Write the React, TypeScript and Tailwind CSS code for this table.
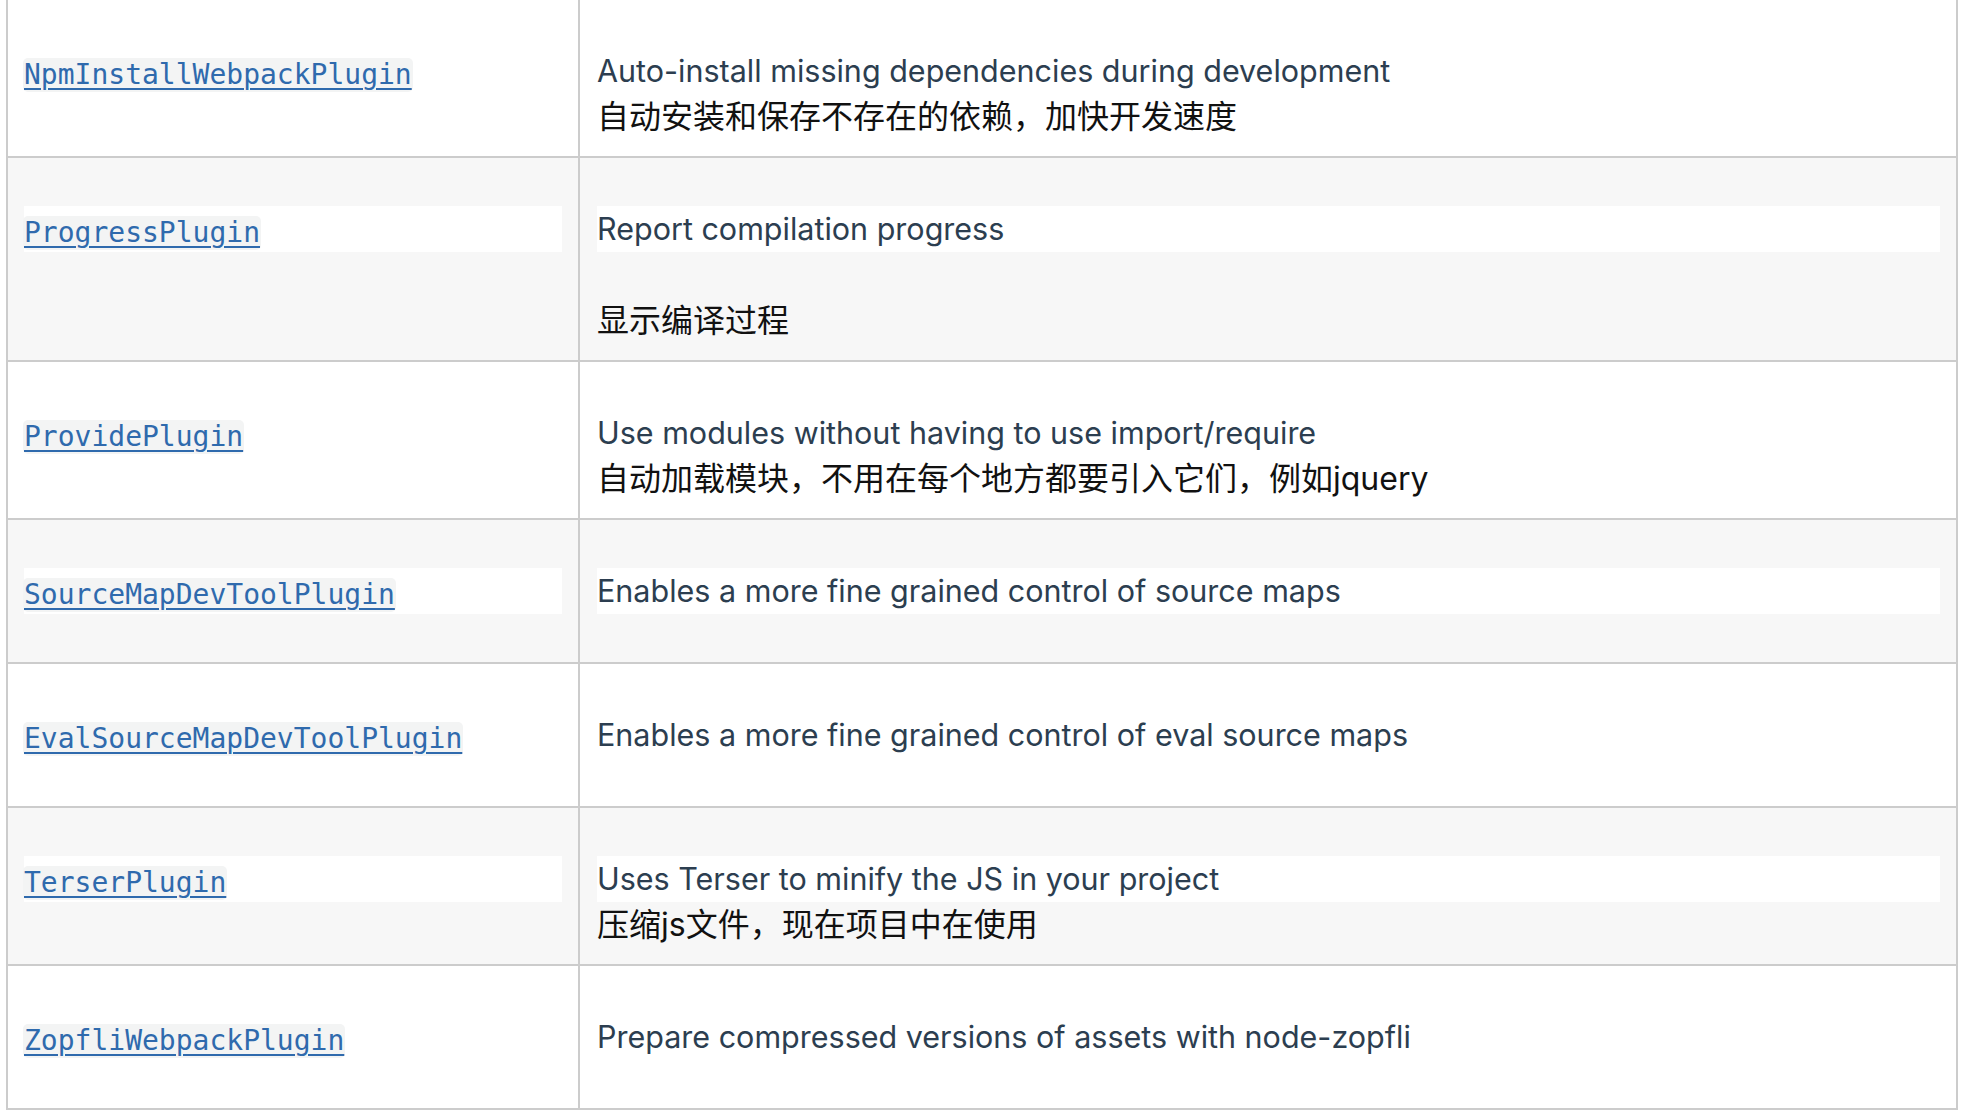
import React from "react";

type Row = {
  name: string;
  en: string;
  zh?: string;
  gray: boolean;
  spaced?: boolean;
};

const rows: Row[] = [
  {
    name: "NpmInstallWebpackPlugin",
    en: "Auto-install missing dependencies during development",
    zh: "自动安装和保存不存在的依赖，加快开发速度",
    gray: false,
  },
  {
    name: "ProgressPlugin",
    en: "Report compilation progress",
    zh: "显示编译过程",
    gray: true,
    spaced: true,
  },
  {
    name: "ProvidePlugin",
    en: "Use modules without having to use import/require",
    zh: "自动加载模块，不用在每个地方都要引入它们，例如jquery",
    gray: false,
  },
  {
    name: "SourceMapDevToolPlugin",
    en: "Enables a more fine grained control of source maps",
    gray: true,
  },
  {
    name: "EvalSourceMapDevToolPlugin",
    en: "Enables a more fine grained control of eval source maps",
    gray: false,
  },
  {
    name: "TerserPlugin",
    en: "Uses Terser to minify the JS in your project",
    zh: "压缩js文件，现在项目中在使用",
    gray: true,
  },
  {
    name: "ZopfliWebpackPlugin",
    en: "Prepare compressed versions of assets with node-zopfli",
    gray: false,
  },
];

function TableRow({ row }: { row: Row }) {
  return (
    <div
      className={
        row.gray
          ? "flex border-b-2 border-[#cccccc] bg-[#f7f7f7]"
          : "flex border-b-2 border-[#cccccc] bg-white"
      }
    >
      <div className="w-[572px] shrink-0 border-r-2 border-[#cccccc] px-4 pt-[48px] pb-[48px]">
        <div className="flex h-[46px] items-center bg-white pt-[8px]">
          <a
            href="#"
            className="ml-[-1px] inline-block h-[34px] rounded-[5px] bg-[#f3f4f4] px-[1px] font-['DejaVu_Sans_Mono',monospace] text-[28px] leading-[34px] text-[#2f6aad] underline decoration-[#2f6aad] decoration-2 underline-offset-[4px]"
          >
            {row.name}
          </a>
        </div>
      </div>
      <div className="min-w-0 flex-1 pl-[17px] pr-4 pt-[48px] pb-[16px]">
        <div className="h-[46px] bg-white font-['Inter',sans-serif] text-[30.5px] leading-[46px] text-[#2c3e50]">
          {row.en}
        </div>
        {row.zh && (
          <div
            className={
              row.spaced
                ? "mt-[46px] h-[46px] font-['Inter','Noto_Sans_CJK_SC',sans-serif] text-[32px] leading-[46px] text-[#111111]"
                : "h-[46px] font-['Inter','Noto_Sans_CJK_SC',sans-serif] text-[32px] leading-[46px] text-[#111111]"
            }
          >
            {row.zh}
          </div>
        )}
      </div>
    </div>
  );
}

export default function App() {
  return (
    <div className="h-[1112px] w-[1964px] overflow-hidden bg-white">
      <div className="ml-[6px] w-[1952px] border-x-2 border-[#cccccc]">
        {rows.map((r) => (
          <TableRow key={r.name} row={r} />
        ))}
      </div>
    </div>
  );
}
